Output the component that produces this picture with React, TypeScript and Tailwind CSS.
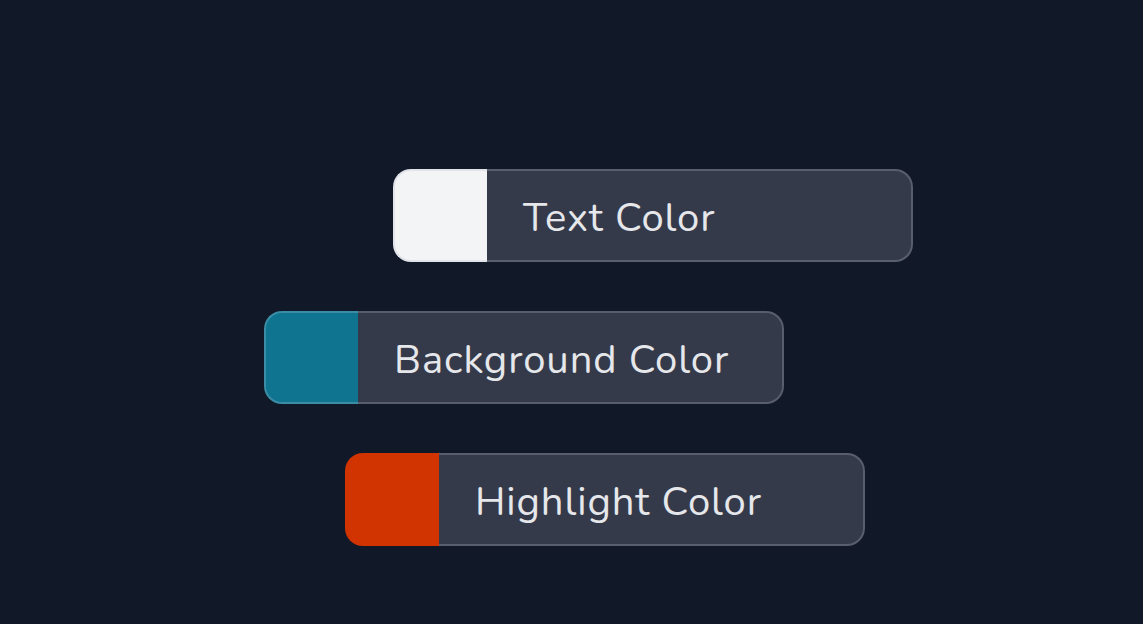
export default function App() {
  const rows = [
    { label: "Text Color", color: "bg-[#f3f4f6]", border: "border-[#e2e4e9]", ml: "ml-[393px]" },
    { label: "Background Color", color: "bg-[#0e7490]", border: "border-[#3b8ca5]", ml: "ml-[264px]" },
    { label: "Highlight Color", color: "bg-[#d13400]", border: "border-[#d13400]", ml: "ml-[345px]" },
  ];
  return (
    <div
      className="w-[1143px] h-[624px] bg-[#111827] pt-[169px] flex flex-col gap-[49px]"
      style={{ fontFamily: "Nunito, Lato, 'Open Sans', sans-serif" }}
    >
      {rows.map((r) => (
        <div key={r.label} className={`flex w-[520px] h-[93px] ${r.ml}`}>
          <div className={`w-[94px] h-full rounded-l-[18px] border-2 border-r-0 ${r.color} ${r.border}`} />
          <div className="flex-1 h-full rounded-r-[18px] border-2 border-l-0 border-[#595e6c] bg-[#353a4a] flex items-center pl-[36px] pt-[4px]">
            <span className="text-[40px] tracking-[0.9px] text-[#e5e7eb] leading-none">{r.label}</span>
          </div>
        </div>
      ))}
    </div>
  );
}
